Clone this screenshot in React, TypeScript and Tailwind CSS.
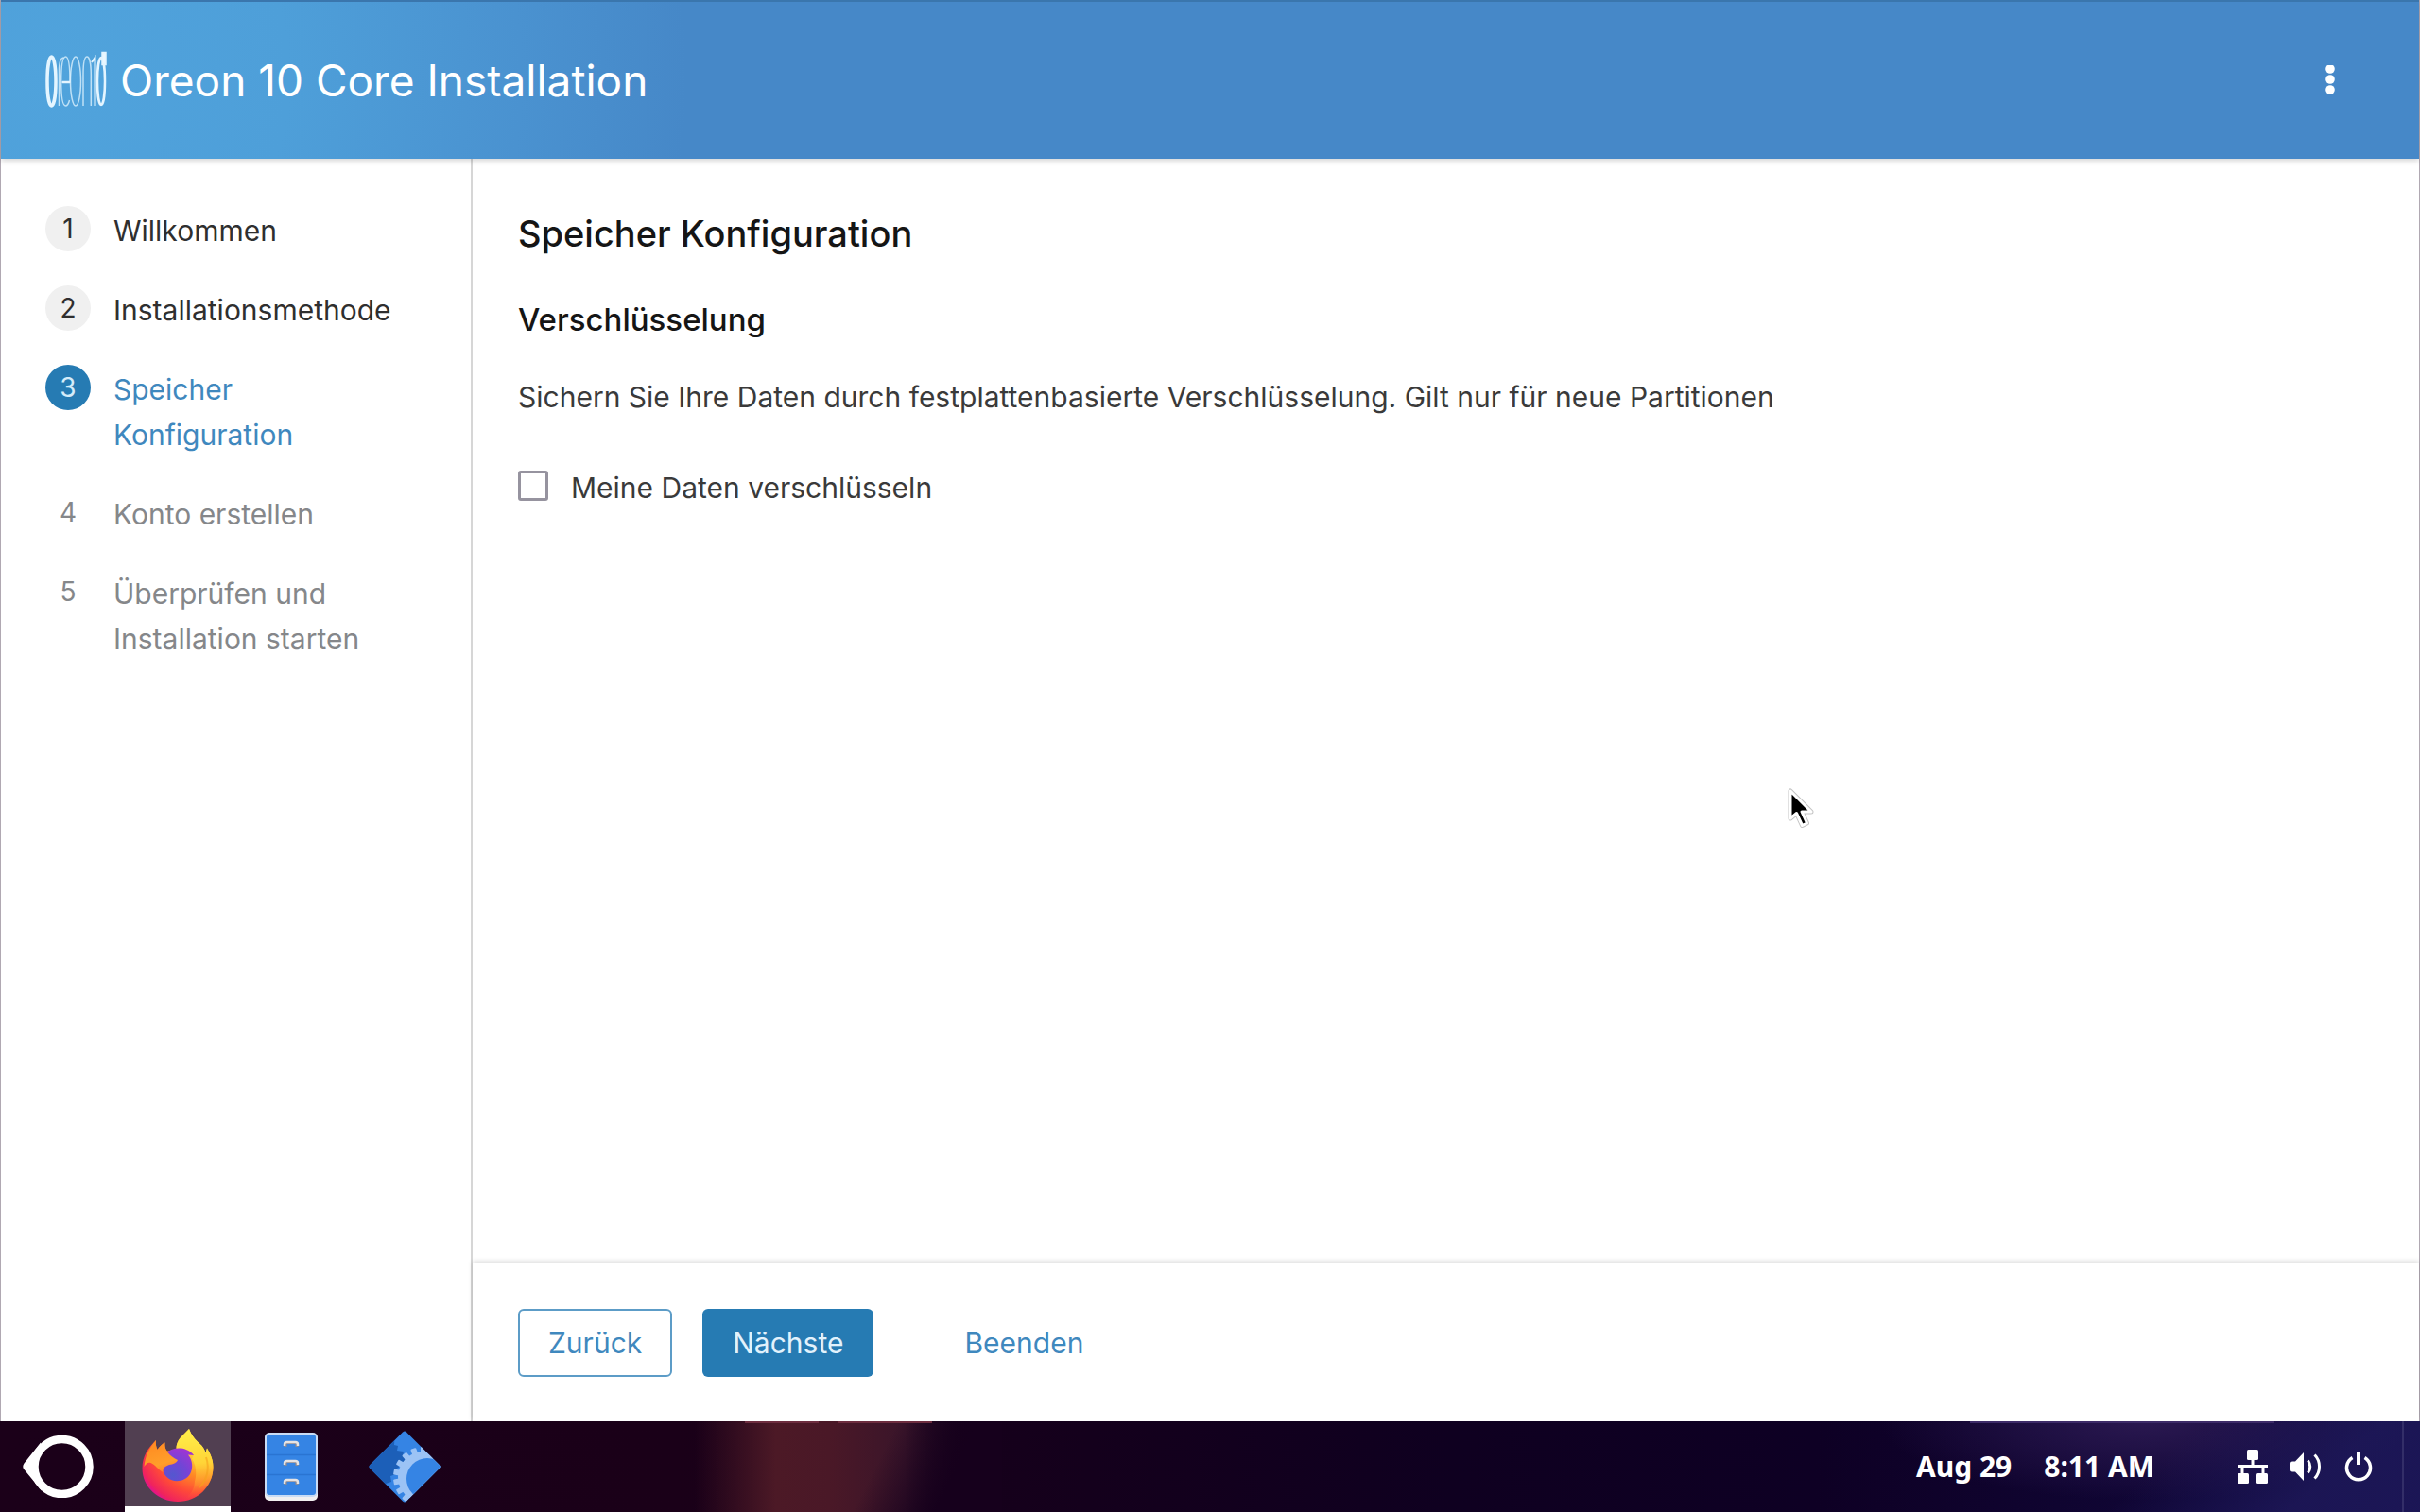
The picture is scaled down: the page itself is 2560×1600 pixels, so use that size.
import { useState } from "react";
import clsx from "clsx";

type StepState = "done" | "current" | "pending";

interface Step {
  label: string;
  state: StepState;
}

const steps: Step[] = [
  { label: "Willkommen", state: "done" },
  { label: "Installationsmethode", state: "done" },
  { label: "Speicher Konfiguration", state: "current" },
  { label: "Konto erstellen", state: "pending" },
  { label: "Überprüfen und Installation starten", state: "pending" },
];

function OreonLogo() {
  return (
    <svg viewBox="0 0 66 66" className="size-[66px]" fill="none" stroke="#e4f5ff" aria-hidden="true">
      <ellipse cx="7.5" cy="34" rx="4.5" ry="26" strokeWidth="3.500" />
      <g strokeWidth="1.500" strokeOpacity=".75">
        <path d="M15.5 60V23c0-8 1.500-14 5-14" />
        <path d="M18.500 35h8.500c0-17-1-27-4.500-27s-4.800 11-4.800 26 1.500 26 4.800 26c2 0 3-2 4-6" />
        <path d="M19 35h8" strokeWidth="2.500" strokeOpacity="1" />
        <ellipse cx="33" cy="34" rx="5.500" ry="26" />
        <path d="M41 60V27c0-12 1.500-19 4-19s4.300 7 4.300 19v33" />
      </g>
      <path d="M50 14l3.500-5v51" strokeWidth="2" />
      <ellipse cx="60" cy="34" rx="4" ry="25" strokeWidth="2.500" />
      <rect x="61.500" y="4" width="3" height="12" fill="#fff" strokeWidth="2.500" />
    </svg>
  );
}

function OreonMenuIcon() {
  return (
    <svg viewBox="0 0 78 66" className="h-[66px] w-[78px]" fill="none" aria-hidden="true">
      <path d="M20 7.500L2.500 29.500q-2.500 3.500 0 6.500L21 58.500z" fill="#fff" />
      <circle cx="42.500" cy="33" r="29" fill="#1b0019" stroke="#fff" strokeWidth="8.500" />
    </svg>
  );
}

function FirefoxIcon() {
  return (
    <svg viewBox="0 0 96 96" className="size-24" aria-hidden="true">
      <defs>
        <radialGradient id="fxBody" cx="76" cy="18" r="78" gradientUnits="userSpaceOnUse">
          <stop offset="0" stopColor="#fff44f" />
          <stop offset=".3" stopColor="#ffc833" />
          <stop offset=".52" stopColor="#ff8a24" />
          <stop offset=".75" stopColor="#ff4a38" />
          <stop offset=".94" stopColor="#f0245c" />
          <stop offset="1" stopColor="#e31587" />
        </radialGradient>
        <linearGradient id="fxFlame" x1="60" y1="8" x2="66" y2="82" gradientUnits="userSpaceOnUse">
          <stop offset="0" stopColor="#fff04a" />
          <stop offset=".5" stopColor="#ffd437" />
          <stop offset=".8" stopColor="#ff9a2e" stopOpacity=".6" />
          <stop offset="1" stopColor="#ff5a36" stopOpacity="0" />
        </linearGradient>
        <radialGradient id="fxGlobe" cx="43" cy="57" r="30" gradientUnits="userSpaceOnUse">
          <stop offset="0" stopColor="#5457cf" />
          <stop offset=".5" stopColor="#7444d6" />
          <stop offset="1" stopColor="#a035d2" />
        </radialGradient>
        <linearGradient id="fxHead" x1="22" y1="24" x2="34" y2="60" gradientUnits="userSpaceOnUse">
          <stop offset="0" stopColor="#ff8c22" />
          <stop offset=".6" stopColor="#ff9f2a" />
          <stop offset="1" stopColor="#ff6a30" />
        </linearGradient>
      </defs>
      <path
        d="M25 20c-.600 4 .200 7 1.500 10 2.500-3.500 5-6 8-7.500-.500 4 .200 7 2.500 9 4-1 7-1 9.500-2.500 0-10 7-14 13.500-21 2.500 7 6 11 11 15.500 3.500 3 5.500 6 6.500 10l1.500-5c3.500 6 6.500 12 6.500 20 0 21-17 36.500-37.500 36.500S10.500 69.500 10.500 50c0-13 6-21.500 14.500-30z"
        fill="url(#fxBody)"
      />
      <path
        d="M60 8c2.500 7 6 11 11 15.500 3.500 3 5.500 6 6.500 10l1.500-5c3.500 6 6.500 12 6.500 20 0 18-14 32-32 35 8-5 12-11 12.500-20 2-7 2-16-3-24l2-4c-5-4-12-6.500-18.500-6.500C46.500 18 55 15 60 8z"
        fill="url(#fxFlame)"
      />
      <path
        d="M36 33c5-4 14-6 21-3 4 1.500 6.500 3.500 8 6l-6-.500c5 6 5.500 14 2 20.500-4.500 7.500-17 10-24 3.500-4.500-4-6-9.500-4-14.500z"
        fill="url(#fxGlobe)"
      />
      <path
        d="M25 20c-.600 4 .200 7 1.500 10 2.500-3.500 5-6 8-7.500-.500 4 .500 7 2.500 10 3 4 7 6.500 11 8.500-1 3-5 4.500-9 5-5 1.500-7 4.500-6.500 8-5.500-3-8-8-13-10-3-1-5 1-7 4 1-11 5-19.500 12.500-28z"
        fill="url(#fxHead)"
      />
      <path d="M78 38c4 12 1 24-7 32" fill="none" stroke="#f5a21d" strokeOpacity=".6" strokeWidth="2" />
    </svg>
  );
}

function FilesIcon() {
  return (
    <svg viewBox="0 0 56 72" className="h-[72px] w-14" aria-hidden="true">
      <rect x="0" y="1" width="56" height="71" rx="5" fill="#f2f0f0" />
      <rect x="0" y="0" width="56" height="68" rx="5" fill="#c9dcf5" />
      <rect x="2" y="2" width="52" height="64" rx="3" fill="#3584e4" />
      <path d="M2 23.500h52M2 44.500h52" stroke="#2a74d2" strokeWidth="1.500" />
      {[10, 30, 50].map((y) => (
        <g key={y}>
          <path d={`M22 ${y + 5}v-2q0-2.500 2.500-2.500h7q2.500 0 2.500 2.500v2`} fill="none" stroke="#8f8b92" strokeWidth="3" />
          <path d={`M21 ${y + 4}v-1.500q0-2.500 2.500-2.500h9q2.500 0 2.500 2.500v1.500`} fill="none" stroke="#e6e3e3" strokeWidth="2.500" />
        </g>
      ))}
    </svg>
  );
}

function InstallerIcon() {
  // teeth of the half-hidden gear
  const teeth = Array.from({ length: 18 }, (_, i) => i * 20);
  return (
    <svg viewBox="0 0 76 76" className="size-[76px]" aria-hidden="true">
      <defs>
        <clipPath id="diamond">
          <path d="M36 1.500q2-2 4 0L74.500 36q2 2 0 4L40 74.500q-2 2-4 0L1.500 40q-2-2 0-4z" />
        </clipPath>
      </defs>
      <g clipPath="url(#diamond)">
        <rect width="76" height="76" fill="#3584e4" />
        <path d="M0 0h28l-1 15 4 1-1 5 7 1-1 5 4 1-3 5-6 1 1 5-5 2 2 5-6 2 1 6-6 2 0 30H0z" fill="#1c5fb8" />
        <g fill="#9cc3f5">
          {teeth.map((a) => (
            <rect key={a} x="55" y="17" width="6" height="10" rx="1" transform={`rotate(${a} 58 49)`} />
          ))}
          <circle cx="58" cy="49" r="27" />
        </g>
        <circle cx="62" cy="51" r="22" fill="#3584e4" />
      </g>
    </svg>
  );
}

function NetworkIcon() {
  return (
    <svg viewBox="0 0 32 36" className="h-9 w-8" fill="#fff" aria-hidden="true">
      <rect x="10" y="0" width="12" height="11" rx="1.500" />
      <rect x="0" y="25" width="12" height="11" rx="1.500" />
      <rect x="20" y="25" width="12" height="11" rx="1.500" />
      <path d="M14.500 10h3v6H32v3h-3.500v7h-3v-7h-19v7h-3v-7H0v-3h14.500z" />
    </svg>
  );
}

function VolumeIcon() {
  return (
    <svg viewBox="0 0 33 32" className="h-8 w-[33px]" fill="none" stroke="#fff" strokeWidth="3" aria-hidden="true">
      <path d="M0 12.500q0-2 2-2h3L14 1v30l-9-9.500H2q-2 0-2-2z" fill="#fff" stroke="none" />
      <path d="M18.500 9.500q4.500 6.500 0 13" />
      <path d="M25.500 3.500q5 5 5 12.500t-5 12.500" />
    </svg>
  );
}

function PowerIcon() {
  return (
    <svg viewBox="0 0 30 34" className="h-[34px] w-[30px]" fill="none" stroke="#fff" aria-hidden="true">
      <path d="M8.500 7.500a12.500 12.500 0 1 0 13 0" strokeWidth="3.500" />
      <path d="M15 1v14" strokeWidth="4" />
    </svg>
  );
}

function Wallpaper() {
  return (
    <svg
      viewBox="0 0 2560 96"
      preserveAspectRatio="none"
      className="absolute inset-0 size-full"
      aria-hidden="true"
    >
      <defs>
        <linearGradient id="base">
          <stop offset="0" stopColor="#1b0019" />
          <stop offset=".28" stopColor="#1a0018" />
          <stop offset=".45" stopColor="#14001c" />
          <stop offset=".6" stopColor="#0f0020" />
          <stop offset=".75" stopColor="#0e0024" />
          <stop offset="1" stopColor="#110a42" />
        </linearGradient>
        <linearGradient id="streak" x1="735" x2="1020" y1="0" y2="0" gradientUnits="userSpaceOnUse">
          <stop offset="0" stopColor="#4c1926" stopOpacity="0" />
          <stop offset=".3" stopColor="#4c1926" />
          <stop offset=".5" stopColor="#4a1827" />
          <stop offset=".78" stopColor="#3a152a" />
          <stop offset="1" stopColor="#2a1028" stopOpacity="0" />
        </linearGradient>
        <linearGradient id="shade" x1="930" x2="1000" y1="40" y2="75" gradientUnits="userSpaceOnUse">
          <stop offset="0" stopColor="#16001c" stopOpacity="0" />
          <stop offset="1" stopColor="#16001c" />
        </linearGradient>
        <radialGradient id="glow" cx="2270" cy="0" r="280" gradientUnits="userSpaceOnUse" gradientTransform="scale(1 .3)">
          <stop offset="0" stopColor="#2a1850" />
          <stop offset="1" stopColor="#2a1850" stopOpacity="0" />
        </radialGradient>
        <linearGradient id="corner" x1="2330" x2="2420" y1="0" y2="96" gradientUnits="userSpaceOnUse">
          <stop offset="0" stopColor="#1f1a5c" stopOpacity="0" />
          <stop offset="1" stopColor="#1f1a5c" stopOpacity=".75" />
        </linearGradient>
      </defs>
      <rect width="2560" height="96" fill="url(#base)" />
      <rect x="735" width="285" height="96" fill="url(#streak)" />
      <rect x="860" width="200" height="96" fill="url(#shade)" />
      <rect x="1960" width="600" height="96" fill="url(#glow)" />
      <rect x="2200" width="360" height="96" fill="url(#corner)" />
      <path d="M788 1h78M886 1h100" stroke="#6d2d3f" strokeWidth="2" />
      <path d="M2084 1h322" stroke="#3d2b68" strokeWidth="2" />
      <path d="M2542 0v96" stroke="#332e68" strokeWidth="2" />
    </svg>
  );
}

function Pointer() {
  return (
    <svg viewBox="0 0 30 44" className="absolute top-[834px] left-[1891px] h-11 w-[30px]" aria-hidden="true">
      <path
        d="M3 3v29l6.500-5.500 6 13 5-2.500-5.500-12H25z"
        fill="#000"
        stroke="#c4c4c4"
        strokeWidth="5"
        strokeLinejoin="round"
      />
      <path d="M3 3v29l6.500-5.500 6 13 5-2.500-5.500-12H25z" fill="#000" stroke="#fff" strokeWidth="3" strokeLinejoin="round" />
    </svg>
  );
}

function StepItem({ step, number }: { step: Step; number: number }) {
  return (
    <li>
      <button
        type="button"
        disabled={step.state === "pending"}
        aria-current={step.state === "current" ? "step" : undefined}
        className={clsx(
          "flex w-full items-start gap-6 text-left text-[30px] leading-[48px]",
          step.state === "done" && "text-[#2f2f2f]",
          step.state === "current" && "text-[#3f88be]",
          step.state === "pending" && "text-[#85878a]"
        )}
      >
        <span
          className={clsx(
            "flex size-12 shrink-0 items-center justify-center rounded-full text-[28px]",
            step.state === "done" && "bg-[#f0f0f0]",
            step.state === "current" && "bg-[#267bb3] text-[#d5ecfa]"
          )}
        >
          {number}
        </span>
        <span className="pt-0.5">{step.label}</span>
      </button>
    </li>
  );
}

export default function App() {
  const [encrypt, setEncrypt] = useState(false);

  return (
    <div className="relative flex h-screen flex-col overflow-hidden bg-white font-['Inter',sans-serif] text-[#3a3a3a]">
      {/* Installer window */}
      <div className="flex min-h-0 flex-1 flex-col border-r border-l border-[#b0a8b2]">
        <header className="z-10 flex h-[168px] shrink-0 items-center justify-between border-t-2 border-[#3a76ad] bg-[#4688c8] bg-[radial-gradient(circle_700px_at_60px_80px,#50a3dc_0%,#4e9fd9_35%,#4a92d0_70%,#4688c8_95%)] pr-[78px] pl-[46px] shadow-[0_2px_6px_rgba(0,0,0,0.18)]">
          <div className="flex items-center gap-[14px]">
            <OreonLogo />
            <h1 className="text-[46px] leading-[60px] text-white">Oreon 10 Core Installation</h1>
          </div>
          <button type="button" aria-label="Menü" className="flex h-16 w-8 items-center justify-center">
            <svg viewBox="0 0 10 32" className="h-8 w-[10px]" fill="#fff" aria-hidden="true">
              <circle cx="5" cy="4" r="4.800" />
              <circle cx="5" cy="15" r="4.800" />
              <circle cx="5" cy="26" r="4.800" />
            </svg>
          </button>
        </header>

        <div className="flex min-h-0 flex-1">
          {/* Steps */}
          <nav className="w-[499px] shrink-0 border-r-2 border-[#d6d6d6] pt-[50px] pr-16 pl-[47px]">
            <ol className="flex flex-col gap-[34px]">
              {steps.map((step, index) => (
                <StepItem key={step.label} step={step} number={index + 1} />
              ))}
            </ol>
          </nav>

          <div className="flex min-w-0 flex-1 flex-col">
            {/* Content */}
            <main className="flex-1 px-12 pt-[53px]">
              <h2 className="text-[38px] leading-[52px] font-medium text-[#151515]">Speicher Konfiguration</h2>
              <h3 className="mt-[43px] text-[33px] leading-[44px] font-medium text-[#151515]">Verschlüsselung</h3>
              <p className="mt-9 text-[30px] leading-[48px]">
                Sichern Sie Ihre Daten durch festplattenbasierte Verschlüsselung. Gilt nur für neue Partitionen
              </p>
              <div className="mt-12 flex items-start gap-6">
                <input
                  id="encrypt"
                  type="checkbox"
                  checked={encrypt}
                  onChange={(e) => setEncrypt(e.target.checked)}
                  className="mt-1.5 size-8 appearance-none rounded-[3px] border-3 border-[#96939f] bg-white checked:bg-[#267bb3]"
                />
                <label htmlFor="encrypt" className="text-[30px] leading-[48px]">
                  Meine Daten verschlüsseln
                </label>
              </div>
            </main>

            {/* Actions */}
            <footer className="flex gap-8 px-12 pt-12 pb-[47px] text-[30px] shadow-[0_-2px_5px_rgba(0,0,0,0.16)]">
              <button type="button" className="h-[72px] rounded-md border-2 border-[#5c9cc7] px-[30px] text-[#3f88be]">
                Zurück
              </button>
              <button type="button" className="h-[72px] rounded-md bg-[#267bb3] px-8 text-[#e2f2fc]">
                Nächste
              </button>
              <button type="button" className="ml-8 h-[72px] px-8 text-[#3f88be]">
                Beenden
              </button>
            </footer>
          </div>
        </div>
      </div>

      {/* Taskbar */}
      <div className="relative h-24 shrink-0 bg-[#1b0019]">
        <Wallpaper />
        <div className="relative flex h-full items-center justify-between pr-[50px]">
          <div className="flex h-full items-center">
            <button type="button" aria-label="Oreon" className="flex h-full w-[132px] items-center justify-center pr-2">
              <OreonMenuIcon />
            </button>
            <button
              type="button"
              aria-label="Firefox"
              className="flex h-full w-28 justify-center border-b-6 border-white bg-[#513f51]"
            >
              <FirefoxIcon />
            </button>
            <button type="button" aria-label="Dateien" className="flex h-full w-32 items-center justify-center">
              <FilesIcon />
            </button>
            <button type="button" aria-label="Installation" className="flex h-full w-28 items-center justify-center">
              <InstallerIcon />
            </button>
          </div>
          <div className="flex items-center">
            <div className="flex gap-[34px] pb-0.5 font-['Noto_Sans',sans-serif] text-[30px] font-bold text-white">
              <span>Aug 29</span>
              <span>8:11 AM</span>
            </div>
            <div className="ml-[88px] flex items-center gap-6">
              <NetworkIcon />
              <VolumeIcon />
              <PowerIcon />
            </div>
          </div>
        </div>
      </div>

      <Pointer />
    </div>
  );
}
